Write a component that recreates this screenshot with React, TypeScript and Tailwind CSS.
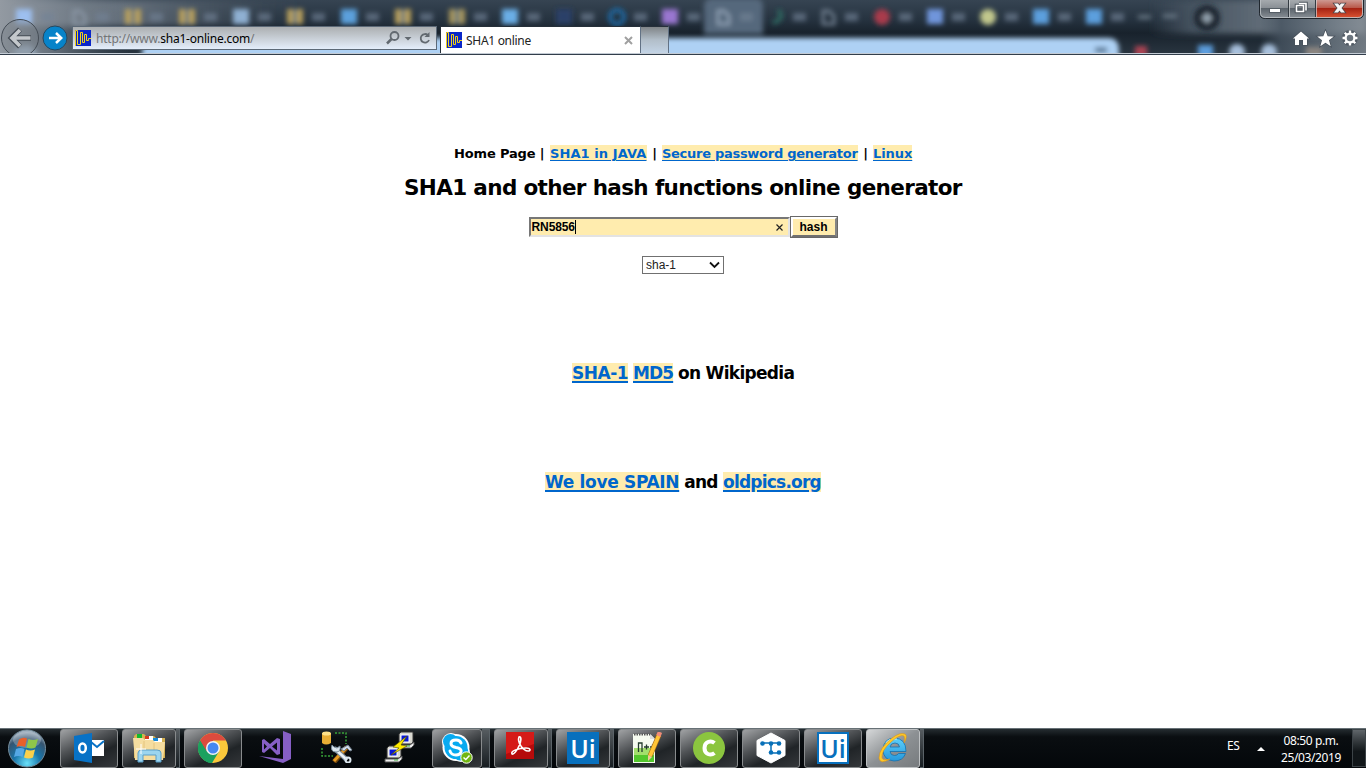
import React from "react";

const tabs: { x: number; c: string; k?: string }[] = [
  { x: 24, c: "#9dbff0" }, { x: 79, c: "#8f9baa", k: "doc" }, { x: 133, c: "#b9a05c", k: "grid" },
  { x: 187, c: "#b9a05c", k: "grid" }, { x: 241, c: "#8fb0d2" }, { x: 295, c: "#b9a05c", k: "grid" },
  { x: 349, c: "#5ba0dc" }, { x: 403, c: "#b9a05c", k: "grid" }, { x: 457, c: "#a8975d", k: "grid" },
  { x: 510, c: "#6aaee6" }, { x: 564, c: "#2a3f68" }, { x: 617, c: "#1b6aa8", k: "ring" },
  { x: 670, c: "#9a76d0" }, { x: 723, c: "#93a4b8", k: "doc" }, { x: 776, c: "#2d6a62", k: "moon" },
  { x: 828, c: "#7b8a9b", k: "doc" }, { x: 882, c: "#a93b4c", k: "round" }, { x: 935, c: "#6f95db" },
  { x: 988, c: "#c1c78c", k: "round" }, { x: 1041, c: "#5b9fdd" }, { x: 1094, c: "#5b9fdd" },
];

function Backdrop() {
  return (
    <svg className="absolute inset-0 h-full w-full" viewBox="0 0 1366 55" preserveAspectRatio="none">
      <defs>
        <linearGradient id="sky" x1="0" x2="0" y1="0" y2="1">
          <stop offset="0" stopColor="#364452" />
          <stop offset=".35" stopColor="#263340" />
          <stop offset=".6" stopColor="#18222c" />
          <stop offset="1" stopColor="#2a3641" />
        </linearGradient>
        <linearGradient id="leftGlow">
          <stop offset="0" stopColor="#939aa2" />
          <stop offset=".4" stopColor="#7b8590" stopOpacity=".75" />
          <stop offset="1" stopColor="#55616d" stopOpacity="0" />
        </linearGradient>
        <linearGradient id="rightGlow">
          <stop offset="0" stopColor="#465360" stopOpacity="0" />
          <stop offset=".2" stopColor="#465360" />
          <stop offset=".75" stopColor="#737e88" />
          <stop offset="1" stopColor="#858d95" />
        </linearGradient>
        <filter id="b3" x="-30%" y="-60%" width="160%" height="220%"><feGaussianBlur stdDeviation="3" /></filter>
        <filter id="b2" x="-10%" y="-60%" width="120%" height="220%"><feGaussianBlur stdDeviation="2.8" /></filter>
      </defs>
      <rect width="1366" height="55" fill="url(#sky)" />
      <rect width="300" height="26" fill="url(#leftGlow)" filter="url(#b3)" />
      <rect width="130" height="55" fill="url(#leftGlow)" />
      <rect x="1150" width="216" height="34" fill="url(#rightGlow)" filter="url(#b3)" />
      <rect x="1260" y="0" width="106" height="55" fill="url(#rightGlow)" opacity=".8" />
      <g filter="url(#b2)">
        <path d="M704 34V6q0-8 9-8h42q8 0 8 8v28z" fill="#55687c" />
        <path d="M142 70V50q3-6 9-7H430V38h678q11 0 11 12v20z" fill="#aed1f4" />
        <circle cx="1207" cy="18" r="13" fill="#1e2831" />
        <path d="M1202 18h10M1207 13v10" stroke="#a9bac8" strokeWidth="3" />
        {tabs.map((t) => (
          <g key={t.x}>
            {t.k === "doc" ? (
              <path d={`M${t.x - 5} 11h6l5 5v8h-11z`} fill="none" stroke={t.c} strokeWidth="2.5" />
            ) : t.k === "ring" ? (
              <circle cx={t.x} cy="17" r="7" fill="none" stroke={t.c} strokeWidth="4" />
            ) : t.k === "moon" ? (
              <path d={`M${t.x + 2} 10q8 8-5 13`} fill="none" stroke={t.c} strokeWidth="4" />
            ) : t.k === "round" ? (
              <circle cx={t.x} cy="17" r="8" fill={t.c} />
            ) : (
              <rect x={t.x - 8} y="9" width="16" height="15" fill={t.c} />
            )}
            {t.k === "grid" && <path d={`M${t.x} 9v15`} stroke="#4e7086" strokeWidth="3" />}
            <rect x={t.x + 17} y="13" width="13" height="8" fill="#718396" opacity=".65" />
          </g>
        ))}
        <path d="M1138 17h13M1163 16h14" stroke="#667582" strokeWidth="4" />
        <path d="M1095 50h12" stroke="#5f7e9c" strokeWidth="6" />
        <rect x="1135" y="46" width="12" height="12" fill="#aa4352" />
        <rect x="1198" y="45" width="15" height="14" fill="#5c9ddd" />
        <circle cx="1237" cy="52" r="8" fill="#a7c0dc" />
        <circle cx="1269" cy="52" r="8" fill="#a7c0dc" />
        <rect x="1306" y="47" width="16" height="12" fill="#8b8580" />
      </g>
      <path d="M12 56l4-8 14-3 8 11z" fill="#b7cfe7" opacity=".7" filter="url(#b3)" />
      <path d="M0 53.5h1366" stroke="#c3cbd4" strokeWidth="1" />
      <path d="M0 54.5h1366" stroke="#323e4b" strokeWidth="1" />
    </svg>
  );
}

function Favicon() {
  return (
    <svg className="h-4 w-4 shrink-0" viewBox="0 0 16 16">
      <rect width="16" height="16" fill="#0a26c8" />
      <path d="M.5 16V.5h2v14h3V2.500h2v10h2V4.500h2v6h2v-2h3" fill="none" stroke="#f1d217" />
    </svg>
  );
}

function BrowserBar() {
  return (
    <header className="relative h-[55px] w-full shrink-0 overflow-hidden">
      <Backdrop />
      <div className="relative flex h-[53px] w-full items-start">
        <svg className="h-[53px] w-[72px] shrink-0" viewBox="0 0 72 53">
          <circle cx="20" cy="38" r="18.500" fill="#788087" fillOpacity=".4" stroke="#444c55" />
          <path d="M31 38H12M20 29.500L11.500 38l8.500 8.500" fill="none" stroke="#454d56" strokeWidth="5.500" />
          <path d="M30.500 38H12M20 30L12 38l8 8" fill="none" stroke="#c4c8cc" strokeWidth="3.600" />
          <circle cx="55" cy="38" r="12" fill="#0783c9" stroke="#28485e" />
          <path d="M49 38h11M56 33l5.200 5-5.200 5" fill="none" stroke="#fff" strokeWidth="2.500" />
        </svg>
        <div className="mt-[26px] flex h-6 w-[365px] shrink-0 items-center border border-[#5c6977] bg-gradient-to-b from-[#acafb1] to-[#e4eefb] pl-[2px]">
          <Favicon />
          <div className="ml-[5px] w-[159px] whitespace-nowrap pt-px font-['Noto_Sans',sans-serif] text-[12px] leading-5 tracking-[-0.22px] text-[#737577]">
            http://www.<span className="text-black">sha1-online.com</span>/
          </div>
          <svg className="ml-[131px] h-5 w-[48px]" viewBox="0 0 48 20" fill="none" stroke="#626970">
            <circle cx="8.500" cy="8" r="4" strokeWidth="1.800" />
            <path d="M5.500 11L1 15.500" strokeWidth="2.500" />
            <path d="M18.500 9h7L22 12.500z" fill="#626970" stroke="none" />
            <path d="M42 7.200A4.300 4.300 0 1 0 43 12" strokeWidth="1.800" />
            <path d="M43.500 4v5h-5z" fill="#626970" stroke="none" />
          </svg>
        </div>
        <div className="ml-[3px] mt-[26px] flex h-[27px] w-[200px] shrink-0 items-center border-l border-t border-[#26303a] bg-white pl-[5px]">
          <Favicon />
          <span className="ml-1 w-[70px] whitespace-nowrap pt-0.5 font-['Noto_Sans',sans-serif] text-[12px] tracking-[-0.3px] text-[#222]">SHA1 online</span>
          <svg className="ml-[88px] h-[9px] w-[9px]" viewBox="0 0 9 9"><path d="M1 1l7 7M8 1L1 8" stroke="#a0a0a0" strokeWidth="2" /></svg>
        </div>
        <div className="mt-[26px] h-[27px] w-[29px] shrink-0 border border-b-0 border-x-[#627285] border-t-[#26303a] bg-gradient-to-b from-[#808588] via-[#b2bec9] to-[#c3d4e6]" />
        <div className="ml-auto flex w-[108px] flex-col">
          <svg className="h-[20px] w-[108px]" viewBox="0 0 108 20">
            <defs>
              <linearGradient id="winGrey" x1="0" x2="0" y1="0" y2="1">
                <stop offset="0" stopColor="#a9adb1" /><stop offset=".5" stopColor="#888e94" /><stop offset=".51" stopColor="#5b636b" /><stop offset="1" stopColor="#858c93" />
              </linearGradient>
              <linearGradient id="winRed" x1="0" x2="0" y1="0" y2="1">
                <stop offset="0" stopColor="#d0a29b" /><stop offset=".5" stopColor="#b85546" /><stop offset=".51" stopColor="#a52313" /><stop offset="1" stopColor="#d95232" />
              </linearGradient>
            </defs>
            <path d="M2.500-1v14q0 4.500 5 4.500H57V-1z" fill="url(#winGrey)" />
            <path d="M57-1v18.500h43q4.500 0 4.500-4.500V-1z" fill="url(#winRed)" />
            <path d="M1.500 0v13.500q0 5 6 5h92q6 0 6-5V0" fill="none" stroke="#20272e" />
            <path d="M2.500 0v13q0 4.500 5 4.500h92q5 0 5-4.500V0M31.500 0v17M58.500 0v17" fill="none" stroke="#d9dbdd" strokeOpacity=".65" />
            <path d="M30.500 0v17M57.500 0v17" stroke="#343b42" />
            <rect x="11.500" y="8.500" width="11" height="4" fill="#fff" stroke="#555d65" />
            <path d="M41 3.500h7v7M38.500 5.500h7v6h-7z" fill="none" stroke="#4d555d" strokeWidth="3.500" />
            <path d="M41 3.500h7v7M38.500 5.500h7v6h-7z" fill="none" stroke="#fff" strokeWidth="1.600" />
            <path d="M76 3.500h4l1.500 2 1.500-2h4l-3.500 4.500 3.500 4.500h-4l-1.500-2-1.500 2h-4L79.500 8z" fill="#f5f5f5" stroke="#50464a" strokeWidth="1.600" paintOrder="stroke" />
          </svg>
          <svg className="mt-[9px] h-[20px] w-[108px]" viewBox="0 0 108 20">
            <path d="M43 2.500l8 7h-2V16h-4v-5h-4v5h-4V9.500h-2z" fill="#fff" stroke="#48515b" strokeWidth="1.500" paintOrder="stroke" />
            <path d="M67.500 1.500l2.200 5.700 6.100.2-4.800 3.800 1.700 6-5.200-3.500-5.200 3.500 1.700-6-4.800-3.800 6.100-.2z" fill="#fff" stroke="#48515b" strokeWidth="1.500" paintOrder="stroke" />
            <circle cx="92" cy="9" r="6" stroke="#48515b" strokeWidth="4" strokeOpacity=".7" fill="none" />
            <circle cx="92" cy="9" r="4.400" fill="none" stroke="#fff" strokeWidth="2.300" />
            <path d="M92 1.500v3M92 13.500v3M84.500 9h3M96.500 9h3M86.700 3.700l2.100 2.100M95.200 12.200l2.100 2.100M97.300 3.700l-2.100 2.100M88.800 12.200l-2.100 2.100" stroke="#fff" strokeWidth="2.300" />
          </svg>
        </div>
      </div>
    </header>
  );
}

const link = "inline-block whitespace-nowrap bg-[#ffecae] text-[#0066cc] underline underline-offset-2";

function Page() {
  return (
    <main className="flex h-[673px] w-full shrink-0 flex-col items-center bg-white font-['DejaVu_Sans','Liberation_Sans',sans-serif] font-bold text-black">
      <nav className="mt-[90px] flex h-4 w-[458px] whitespace-nowrap text-[13px] leading-[17px] tracking-[-0.16px]">
        <span className="w-24">Home Page |</span>
        <a className={link + " h-4 w-[97px] tracking-[0.09px]"}>SHA1 in JAVA</a>
        <span className="w-[15px] text-center">|</span>
        <a className={link + " h-4 w-[196px] tracking-[-0.28px]"}>Secure password generator</a>
        <span className="w-[15px] text-center">|</span>
        <a className={link + " h-4 w-[39px] tracking-[-0.08px]"}>Linux</a>
      </nav>
      <h1 className="mt-[14px] h-[26px] w-[558px] whitespace-nowrap text-[21.5px] leading-[26px] tracking-[-0.64px]">SHA1 and other hash functions online generator</h1>
      <form className="mt-[15px] flex h-[22px] w-[309px] items-center font-['Liberation_Sans',Arial,sans-serif] text-[12px]">
        <div className="flex h-5 w-[261px] items-center border-2 border-b-[#e3e3e3] border-l-[#777] border-r-[#e3e3e3] border-t-[#777] bg-[#ffecae]">
          <span className="w-[45px] border-r border-black pl-px leading-[14px] tracking-[-0.1px]">RN5856</span>
          <svg className="ml-auto mr-[5px] h-[7px] w-[7px]" viewBox="0 0 7 7"><path d="M.5.5l6 6M6.500.5l-6 6" stroke="#222" strokeWidth="1.200" /></svg>
        </div>
        <div className="h-[22px] w-12 border border-[#686868]">
          <div className="flex h-5 w-[46px] items-center justify-center border-2 border-b-[#707070] border-l-white border-r-[#858585] border-t-white bg-[#ffecae]">hash</div>
        </div>
      </form>
      <div className="mt-[18px] flex h-[18px] w-[82px] items-center justify-between border border-[#707070] px-[3px] font-['Liberation_Sans',Arial,sans-serif] text-[12px] font-normal text-[#222]">
        <span>sha-1</span>
        <svg className="h-[8px] w-[11px]" viewBox="0 0 11 8"><path d="M1 1.500l4.500 4.500L10 1.500" fill="none" stroke="#111" strokeWidth="1.800" /></svg>
      </div>
      <p className="mt-[89px] flex h-5 w-[222px] whitespace-nowrap text-[17px] leading-[21px]">
        <a className={link + " h-5 w-[56px] decoration-2 tracking-[-0.5px]"}>SHA-1</a>
        <a className={link + " ml-[5px] h-5 w-[40px] decoration-2 tracking-[-0.9px]"}>MD5</a>
        <span className="ml-[5px] tracking-[-0.7px]">on Wikipedia</span>
      </p>
      <p className="mt-[89px] flex h-5 w-[276px] whitespace-nowrap text-[17px] leading-[21px]">
        <a className={link + " h-5 w-[134px] decoration-2 tracking-[-0.33px]"}>We love SPAIN</a>
        <span className="w-[44px] text-center tracking-[-0.8px]">and</span>
        <a className={link + " h-5 w-[98px] decoration-2 tracking-[-0.78px]"}>oldpics.org</a>
      </p>
    </main>
  );
}

function TaskButton({ children, size, stack, active }: { children: React.ReactNode; size: string; stack?: string; active?: boolean }) {
  return (
    <div className="flex h-[39px] shrink-0">
      <div className={`${size} flex h-[39px] shrink-0 items-center justify-center rounded-[3px] border pb-0.5 ${active ? "border-[#bec1c3] bg-gradient-to-br from-[#d5d7d8] via-[#8d9194] to-[#777b7e]" : "border-[#888b8d] bg-[linear-gradient(155deg,#a0a2a4_0%,#505356_38%,#202427_65%,#34373a_100%)]"}`}>{children}</div>
      {stack && <div className={`${stack} h-[39px] border border-l-0 border-[#5b6368] bg-gradient-to-b from-[#565c60] to-[#171d21]`} />}
    </div>
  );
}

const ico = "h-8 w-8 shrink-0";

function StartOrb() {
  return (
    <svg className="h-10 w-10" viewBox="0 0 40 40">
      <defs>
        <radialGradient id="orb" cx=".5" cy=".9" r=".9"><stop offset="0" stopColor="#6ae0f8" /><stop offset=".4" stopColor="#1976ab" /><stop offset=".75" stopColor="#36546f" /><stop offset="1" stopColor="#b8c6d2" /></radialGradient>
      </defs>
      <circle cx="20" cy="19.500" r="18.500" fill="url(#orb)" stroke="#748d9c" />
      <ellipse cx="20" cy="11" rx="14" ry="8" fill="#fff" opacity=".25" />
      <path d="M12 10.500q4-3 8-1l-2 8.500q-4-2-8.500 0z" fill="#e8602b" />
      <path d="M21.500 10q4 2 9.500 0l-2.500 8.500q-4 2-9 0z" fill="#8fc64a" />
      <path d="M9 20q4.500-2 8.500 0l-2 8q-4-2-8.500 0z" fill="#55a8e5" />
      <path d="M19 20.500q4 2 9 0l-2 8q-4 2-9 0z" fill="#fbd04b" />
    </svg>
  );
}

function Outlook() {
  return (
    <svg className={ico} viewBox="0 0 32 32">
      <path d="M18 8h13v16H18z" fill="#fff" /><path d="M18 10l6 5 7-6" fill="none" stroke="#0872c6" strokeWidth="2" />
      <path d="M1 4l18-3v30L1 28z" fill="#0872c6" />
      <ellipse cx="9.500" cy="16" rx="3.300" ry="4.500" fill="none" stroke="#fff" strokeWidth="2.500" />
    </svg>
  );
}

function Folder() {
  return (
    <svg className={ico} viewBox="0 0 32 32">
      <path d="M1 4l2-2h8l2 2h8l2 2h9v20H1z" fill="#d3b050" />
      <path d="M4 2h5v4H4z" fill="#10b82e" /><path d="M12 4h8v4h-8z" fill="#fff" /><path d="M12 4h4v3h-4z" fill="#d83a20" /><path d="M20 6h9v4h-9z" fill="#fff" /><path d="M20 6h5v3h-5z" fill="#1689d8" />
      <path d="M0 6h10l2 2h8l2 2h10l-2 18H2z" fill="#f5dda0" /><path d="M11 9v12M21 11v12" stroke="#e4c47c" fill="none" />
      <path d="M5 30v-9q0-3 4-3h15q4 0 4 3v9h-5v-7H10v7z" fill="#9cd5ef" stroke="#5a9fc9" /><path d="M8 12v10M3 17h10" stroke="#fff" />
    </svg>
  );
}

function Chrome() {
  return (
    <svg className={ico} viewBox="0 0 32 32">
      <circle cx="16" cy="16" r="15" fill="#fbc83b" />
      <path d="M16 16L3 8.500A15 15 0 0 1 29 8.500H16z" fill="#dc4b3e" />
      <path d="M3 8.500A15 15 0 0 0 15 31l7-11.500-6-3z" fill="#1ba15f" />
      <path d="M3 8.500l6.500 11 6.500-3.500V8.500h13" fill="#dc4b3e" />
      <path d="M3 8.500l7 11.500 6 3-1 8A15 15 0 0 1 3 8.500z" fill="#1ba15f" />
      <circle cx="16" cy="16" r="7" fill="#f4f4f4" /><circle cx="16" cy="16" r="5.500" fill="#4688f1" />
    </svg>
  );
}

function VisualStudio() {
  return (
    <svg className={ico} viewBox="0 0 32 32">
      <path d="M24 0l8 3v25l-8 4-24-7 24 3z" fill="#865fc5" />
      <path d="M3 9l2-1 6 5 7-6 3 1v15l-3 1-7-7-6 5-2-1zM5 12.500v6l3-3zM18 11.500l-5 4 5 4z" fill="#865fc5" fillRule="evenodd" />
    </svg>
  );
}

function Tools() {
  return (
    <svg className={ico} viewBox="0 0 32 32">
      <path d="M1 2v10q4 3 9 0V2z" fill="#e9ae35" /><ellipse cx="5.500" cy="2.500" rx="4.500" ry="2" fill="#ffe28a" />
      <path d="M14 2h11v11M1 17v8h11" fill="none" stroke="#38a438" strokeWidth="1.500" strokeDasharray="2 1.500" />
      <path d="M13 31l13-15" stroke="#71450d" strokeWidth="5" /><path d="M13 30l13-14" stroke="#e79b22" strokeWidth="3" />
      <path d="M20 18l7-4 4 5-2 1-3-3-3 3z" fill="#d2dce7" stroke="#728291" />
      <path d="M13 17l13 12" stroke="#7d8f9f" strokeWidth="5" /><path d="M13 17l13 12" stroke="#edf3f8" strokeWidth="2.500" />
      <path d="M11 14q-2 7 4 7 5 0 4-6l-3 2-3-1z" fill="#dce7ef" stroke="#7d8f9f" /><circle cx="27" cy="29" r="2.500" fill="none" stroke="#dce7ef" strokeWidth="2" />
    </svg>
  );
}

function Putty() {
  const pc = (x: number, y: number) => (
    <g transform={`translate(${x} ${y})`}>
      <path d="M1 1l2-2h12v10l-2 2H1z" fill="#d9d9d1" stroke="#333" /><rect x="3" y="2" width="8" height="7" fill="#0717d6" stroke="#fff" />
      <path d="M-1 12h13l4-3v3l-3 3H-1z" fill="#eee" stroke="#555" /><path d="M8 13h4" stroke="#3cae3c" />
    </g>
  );
  return <svg className={ico} viewBox="0 0 32 32">{pc(15, 2)}{pc(3, 16)}<path d="M24 5L10 16l6 1-8 7 16-9-6-1z" fill="#ffea00" stroke="#4e4900" strokeWidth=".6" /></svg>;
}

function Skype() {
  return (
    <svg className={ico} viewBox="0 0 32 32">
      <circle cx="10" cy="10" r="9" fill="#fff" /><circle cx="20" cy="21" r="9" fill="#fff" /><circle cx="15" cy="15.500" r="13.500" fill="#fff" />
      <circle cx="9.500" cy="9.500" r="7.500" fill="#08aaf0" /><circle cx="19.500" cy="20.500" r="8" fill="#08aaf0" /><circle cx="15" cy="15.500" r="11.500" fill="#08aaf0" />
      <path d="M20 11q-1-3-5-3-5 0-5 3.500 0 3 5 4 6 1 5 4.500-1 3-5 3-5 0-6-4" fill="none" stroke="#fff" strokeWidth="3" strokeLinecap="round" />
      <circle cx="25.500" cy="25.500" r="5.700" fill="#72b611" stroke="#fff" /><path d="M22.500 25.500l2.300 2 3.700-4" fill="none" stroke="#fff" strokeWidth="1.500" />
    </svg>
  );
}

function Acrobat() {
  return <svg className="mb-1 mr-0.5 h-7 w-7" viewBox="0 0 28 28"><rect width="28" height="27" fill="#b50b0b" /><path d="M0 0h28v12L0 22z" fill="#d51a18" /><path d="M13 5c3-1 2 5 0 9-2 5-6 9-7 8-2-3 7-6 14-6 5 0 5 3 2 3-5 0-11-9-9-14z" fill="none" stroke="#fff" strokeWidth="1.600" /></svg>;
}

function Notepad() {
  return (
    <svg className={ico} viewBox="0 0 32 32">
      <path d="M2 2h17l5 5v24H2z" fill="#f6fbf0" /><path d="M3 16h20v14H3z" fill="#a2df6c" /><path d="M3 23h20v7H3z" fill="#53c72c" />
      <path d="M3 2.500h17" stroke="#555" strokeDasharray="1.500 1" strokeWidth="2" /><path d="M19 2v5h5" fill="#ddd" />
      <path d="M7.500 20v-9h3.500v9M13 15h5M15.500 12.500v5M19 15h5M21.500 12.500v5" fill="none" stroke="#243c2d" strokeWidth="1.300" />
      <path d="M28 3L19 24" stroke="#a36a15" strokeWidth="5" /><path d="M28 3L19 24" stroke="#ffc537" strokeWidth="3.800" /><path d="M29 0l-1.700 4" stroke="#f08b78" strokeWidth="4.500" /><path d="M17 23l4 2-4 4z" fill="#edc896" />
    </svg>
  );
}

function Camtasia() {
  return <svg className={ico} viewBox="0 0 32 32"><circle cx="16" cy="16" r="16" fill="#8bc53f" /><path d="M21.500 11q-3-2.500-6.500-1-3.500 1.600-3.500 6t3.500 6q3.500 1.500 6.500-1" fill="none" stroke="#fff" strokeWidth="4" /></svg>;
}

function Orchestrator() {
  return <svg className={ico} viewBox="0 0 32 32"><path d="M16 1l14 7.500v15L16 31 2 23.500v-15z" fill="#fff" stroke="#fff" strokeLinejoin="round" /><path d="M8 11h15M16 11v10h8" fill="none" stroke="#0870b8" strokeWidth="1.500" />{[[7.5, 11.5], [16, 11.5], [24, 11.5], [16, 20.5], [24, 20.5]].map(([x, y]) => <circle key={`${x}-${y}`} cx={x} cy={y} r="2.300" fill="#0870b8" />)}</svg>;
}

function Ie() {
  return (
    <svg className={ico} viewBox="0 0 32 32">
      <defs><linearGradient id="ieBlue" x1="0" x2="0" y1="0" y2="1"><stop offset="0" stopColor="#5fd0fa" /><stop offset="1" stopColor="#2598dc" /></linearGradient></defs>
      <path d="M29 19.500H13q.5 4 4.500 4 3 0 4-2h7Q26 29 17 29 6 28 6 17.500 7 6 17.500 6 29 6.500 29 19.500zM13 15h9.500q-.5-4-4.500-4-4.300 0-5 4z" fill="url(#ieBlue)" fillRule="evenodd" stroke="#1471af" strokeWidth=".8" />
      <path d="M9 11q4-5 11-4" fill="none" stroke="#c7f1ff" strokeWidth="1.200" />
      <path d="M27 11q4-7 1-9-5-2-13 4Q2 16 2 26q1 7 11 1-7 2-8-1-1-7 9-16 9-8 13-6 1 2 0 7z" fill="#ffc926" stroke="#d7941c" strokeWidth=".6" />
    </svg>
  );
}

function Taskbar() {
  return (
    <footer className="flex h-10 w-full shrink-0 border-t border-[#677176] bg-gradient-to-b from-[#252d31] via-[#0a0e11] via-20% to-[#04070a]">
      <div className="flex w-[60px] shrink-0 items-center pl-[7px]"><StartOrb /></div>
      <div className="flex gap-x-1">
        <TaskButton size="w-[58px]"><Outlook /></TaskButton>
        <TaskButton size="w-[54px]" stack="w-[4px]"><Folder /></TaskButton>
        <TaskButton size="w-[58px]"><Chrome /></TaskButton>
        <div className="flex w-[58px] items-center justify-center pb-1"><VisualStudio /></div>
        <div className="flex w-[58px] items-center justify-center pb-1"><Tools /></div>
        <div className="flex w-[58px] items-center justify-center pb-1"><Putty /></div>
        <TaskButton size="w-[50px]" stack="w-[8px]"><Skype /></TaskButton>
        <TaskButton size="w-[54px]" stack="w-[4px]"><Acrobat /></TaskButton>
        <TaskButton size="w-[54px]" stack="w-[4px]"><span className="flex h-8 w-8 items-center justify-center bg-[#0870bd] font-['Open_Sans',sans-serif] text-[25px] font-semibold leading-8 text-white">Ui</span></TaskButton>
        <TaskButton size="w-[58px]"><Notepad /></TaskButton>
        <TaskButton size="w-[58px]"><Camtasia /></TaskButton>
        <TaskButton size="w-[58px]"><Orchestrator /></TaskButton>
        <TaskButton size="w-[58px]"><span className="flex h-8 w-8 items-center justify-center border-2 border-[#0870bd] bg-white font-['Open_Sans',sans-serif] text-[25px] font-semibold leading-7 text-[#0870bd]">Ui</span></TaskButton>
        <TaskButton size="w-[54px]" stack="w-[4px]" active><Ie /></TaskButton>
      </div>
      <div className="ml-auto flex font-['Noto_Sans',sans-serif] text-[12px] text-white">
        <span className="mt-[9px] w-[30px] text-[12px] leading-4 tracking-[-0.3px]">ES</span>
        <svg className="mt-[18px] h-1 w-2" viewBox="0 0 8 4"><path d="M0 4l4-4 4 4z" fill="#fff" /></svg>
        <div className="ml-px flex w-[90px] flex-col items-center whitespace-nowrap pt-[3px] leading-[17px] tracking-[-0.4px]"><span>08:50 p.m.</span><span>25/03/2019</span></div>
        <div className="ml-[-4px] h-[38px] w-[14px] border border-[#3c4347] bg-gradient-to-b from-[#60666a] to-[#111619] to-60%" />
      </div>
    </footer>
  );
}

export default function App() {
  return (
    <div className="flex h-[768px] w-[1366px] flex-col overflow-hidden">
      <BrowserBar />
      <Page />
      <Taskbar />
    </div>
  );
}
